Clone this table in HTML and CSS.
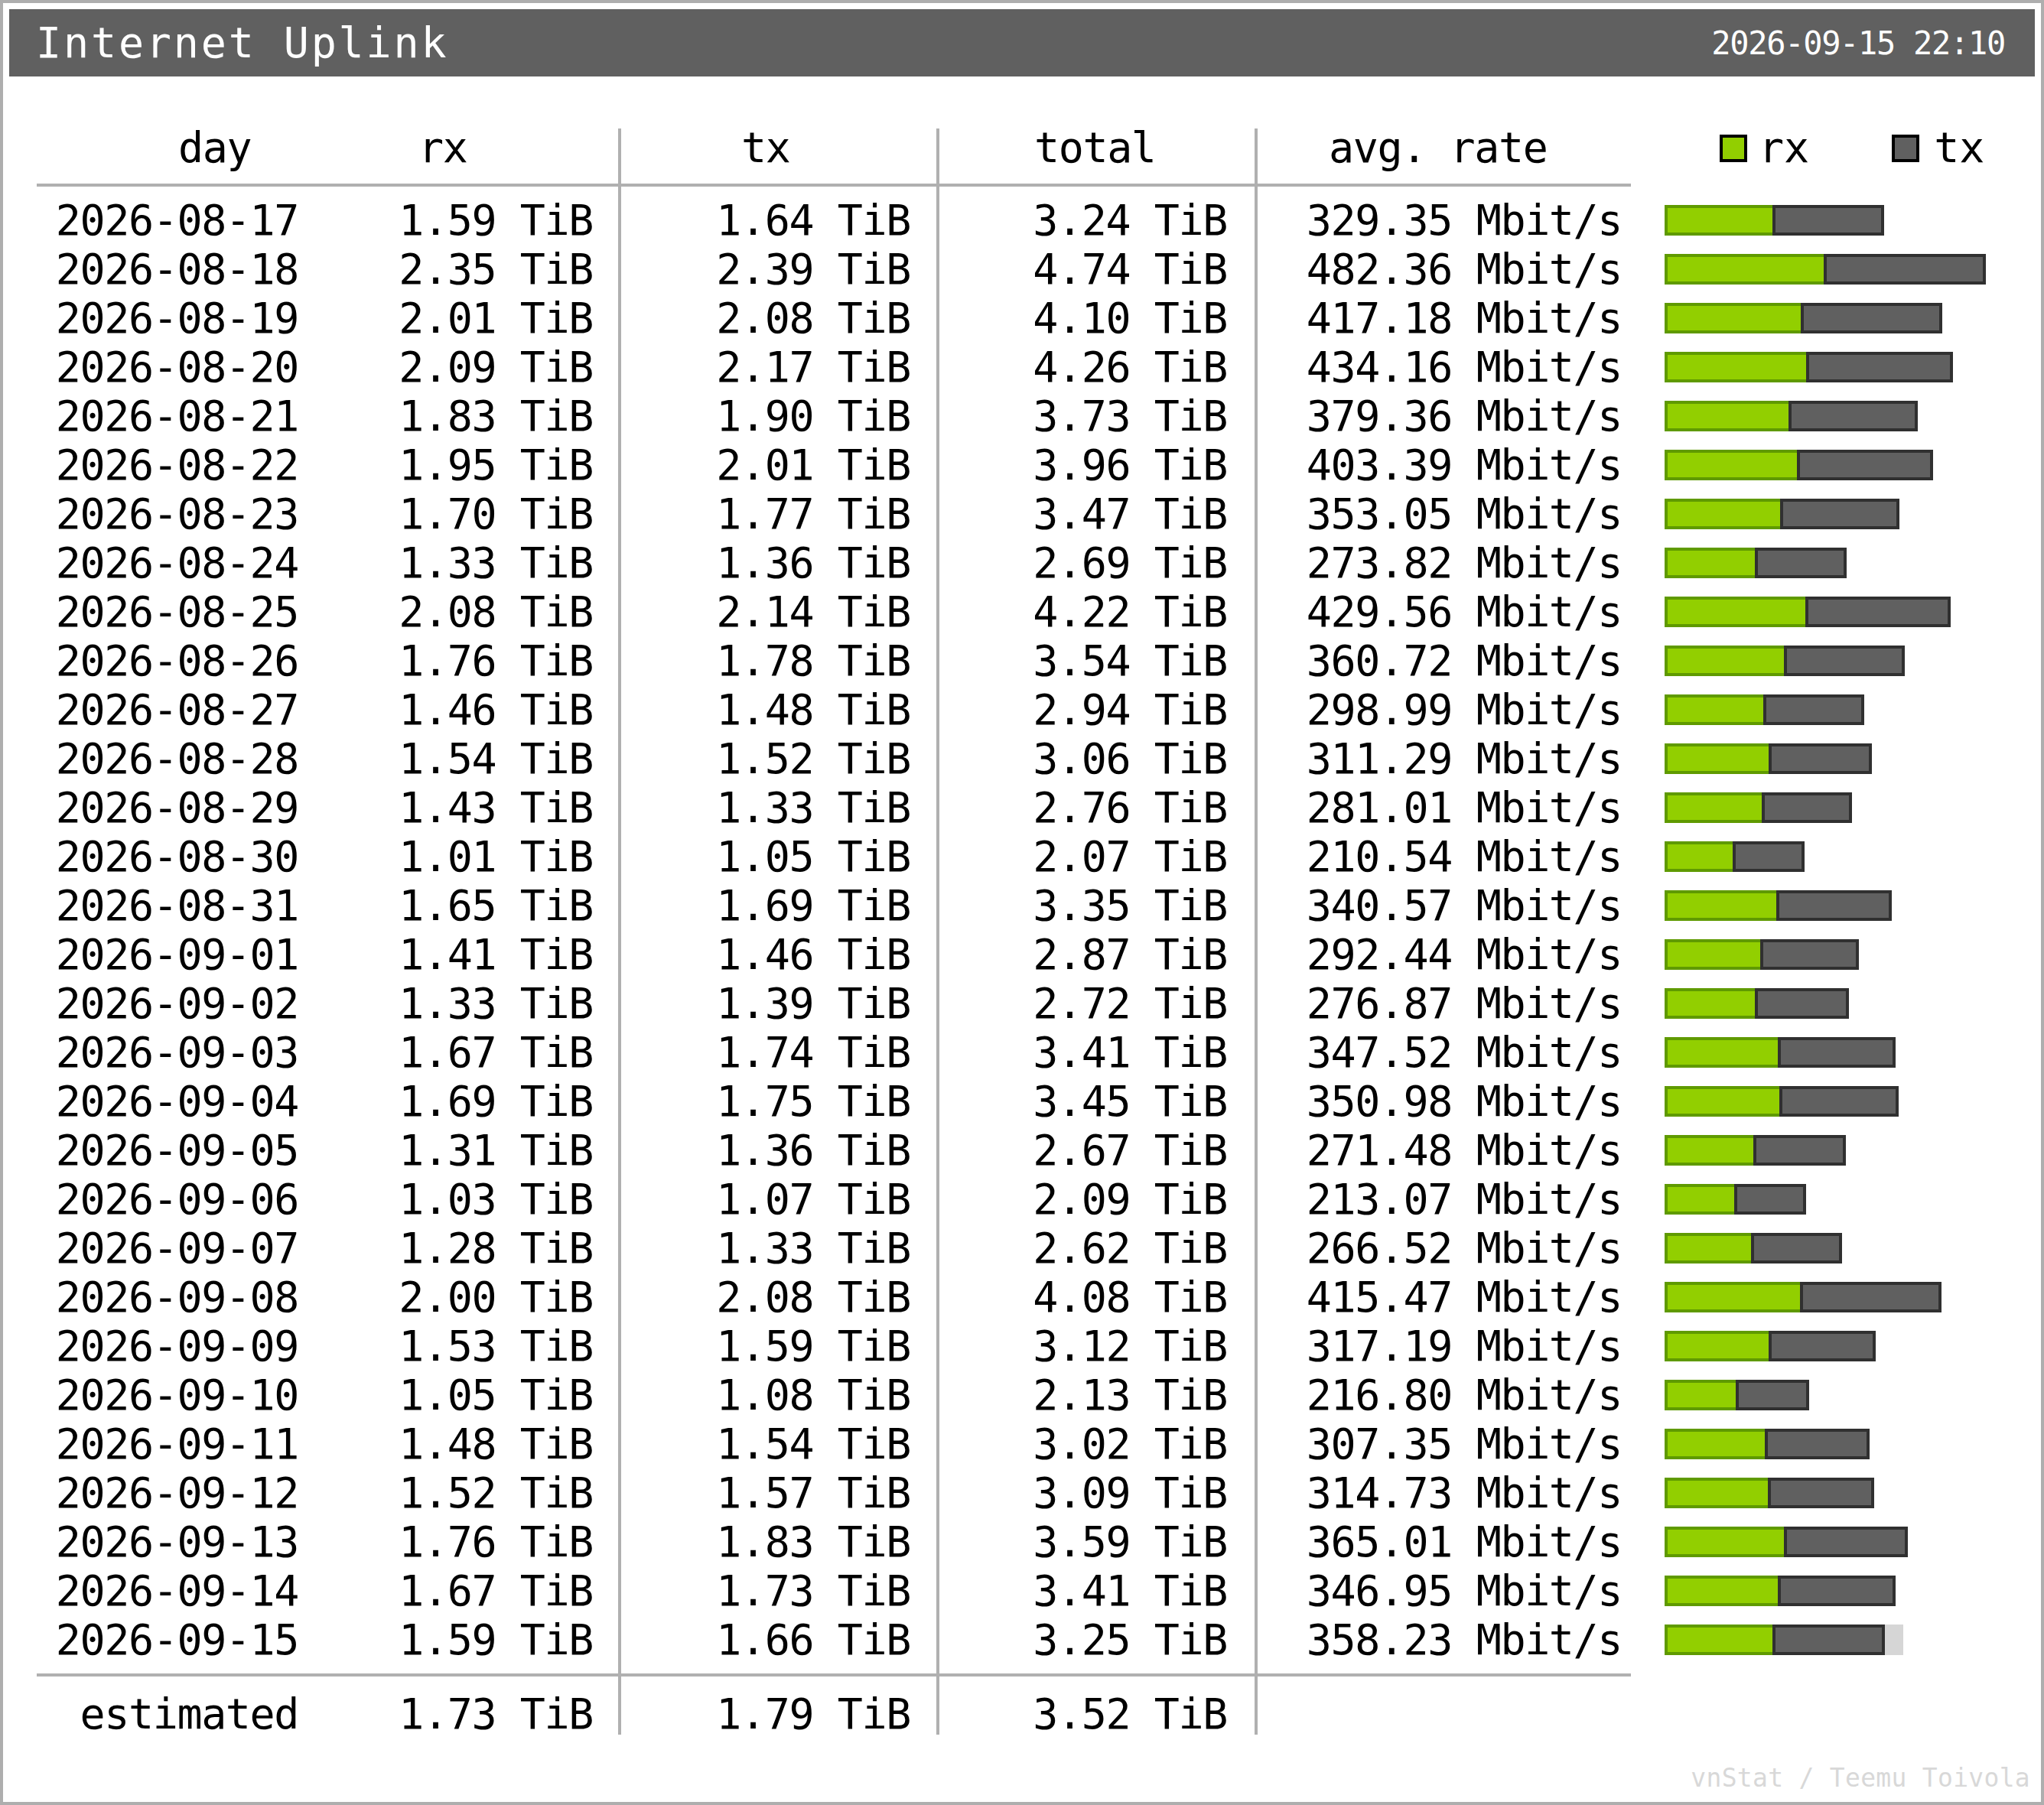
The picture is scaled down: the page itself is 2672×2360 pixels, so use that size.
FILE: index.html
```html
<!DOCTYPE html>
<html>
<head>
<meta charset="utf-8">
<title>Internet Uplink</title>
<link rel="stylesheet" href="styles.css">
</head>
<body>
<div class="frame">
  <header class="topbar">
    <span class="title">Internet Uplink</span>
    <span class="date">2026-09-15 22:10</span>
  </header>
  <div class="tbl">
    <div class="h c1">day</div>
    <div class="h c2">rx</div>
    <div class="h c3 sep">tx</div>
    <div class="h c4 sep">total</div>
    <div class="h c5 sep">avg. rate</div>
    <div class="h leg"><i class="sw sw-rx"></i><span class="lg lg-rx">rx</span><i class="sw sw-tx"></i><span class="lg lg-tx">tx</span></div>

    <div class="b num c1">
      <div>2026-08-17</div><div>2026-08-18</div><div>2026-08-19</div><div>2026-08-20</div><div>2026-08-21</div>
      <div>2026-08-22</div><div>2026-08-23</div><div>2026-08-24</div><div>2026-08-25</div><div>2026-08-26</div>
      <div>2026-08-27</div><div>2026-08-28</div><div>2026-08-29</div><div>2026-08-30</div><div>2026-08-31</div>
      <div>2026-09-01</div><div>2026-09-02</div><div>2026-09-03</div><div>2026-09-04</div><div>2026-09-05</div>
      <div>2026-09-06</div><div>2026-09-07</div><div>2026-09-08</div><div>2026-09-09</div><div>2026-09-10</div>
      <div>2026-09-11</div><div>2026-09-12</div><div>2026-09-13</div><div>2026-09-14</div><div>2026-09-15</div>
    </div>
    <div class="b num c2">
      <div>1.59 TiB</div><div>2.35 TiB</div><div>2.01 TiB</div><div>2.09 TiB</div><div>1.83 TiB</div>
      <div>1.95 TiB</div><div>1.70 TiB</div><div>1.33 TiB</div><div>2.08 TiB</div><div>1.76 TiB</div>
      <div>1.46 TiB</div><div>1.54 TiB</div><div>1.43 TiB</div><div>1.01 TiB</div><div>1.65 TiB</div>
      <div>1.41 TiB</div><div>1.33 TiB</div><div>1.67 TiB</div><div>1.69 TiB</div><div>1.31 TiB</div>
      <div>1.03 TiB</div><div>1.28 TiB</div><div>2.00 TiB</div><div>1.53 TiB</div><div>1.05 TiB</div>
      <div>1.48 TiB</div><div>1.52 TiB</div><div>1.76 TiB</div><div>1.67 TiB</div><div>1.59 TiB</div>
    </div>
    <div class="b num c3 sep">
      <div>1.64 TiB</div><div>2.39 TiB</div><div>2.08 TiB</div><div>2.17 TiB</div><div>1.90 TiB</div>
      <div>2.01 TiB</div><div>1.77 TiB</div><div>1.36 TiB</div><div>2.14 TiB</div><div>1.78 TiB</div>
      <div>1.48 TiB</div><div>1.52 TiB</div><div>1.33 TiB</div><div>1.05 TiB</div><div>1.69 TiB</div>
      <div>1.46 TiB</div><div>1.39 TiB</div><div>1.74 TiB</div><div>1.75 TiB</div><div>1.36 TiB</div>
      <div>1.07 TiB</div><div>1.33 TiB</div><div>2.08 TiB</div><div>1.59 TiB</div><div>1.08 TiB</div>
      <div>1.54 TiB</div><div>1.57 TiB</div><div>1.83 TiB</div><div>1.73 TiB</div><div>1.66 TiB</div>
    </div>
    <div class="b num c4 sep">
      <div>3.24 TiB</div><div>4.74 TiB</div><div>4.10 TiB</div><div>4.26 TiB</div><div>3.73 TiB</div>
      <div>3.96 TiB</div><div>3.47 TiB</div><div>2.69 TiB</div><div>4.22 TiB</div><div>3.54 TiB</div>
      <div>2.94 TiB</div><div>3.06 TiB</div><div>2.76 TiB</div><div>2.07 TiB</div><div>3.35 TiB</div>
      <div>2.87 TiB</div><div>2.72 TiB</div><div>3.41 TiB</div><div>3.45 TiB</div><div>2.67 TiB</div>
      <div>2.09 TiB</div><div>2.62 TiB</div><div>4.08 TiB</div><div>3.12 TiB</div><div>2.13 TiB</div>
      <div>3.02 TiB</div><div>3.09 TiB</div><div>3.59 TiB</div><div>3.41 TiB</div><div>3.25 TiB</div>
    </div>
    <div class="b num c5 sep">
      <div>329.35 Mbit/s</div><div>482.36 Mbit/s</div><div>417.18 Mbit/s</div><div>434.16 Mbit/s</div><div>379.36 Mbit/s</div>
      <div>403.39 Mbit/s</div><div>353.05 Mbit/s</div><div>273.82 Mbit/s</div><div>429.56 Mbit/s</div><div>360.72 Mbit/s</div>
      <div>298.99 Mbit/s</div><div>311.29 Mbit/s</div><div>281.01 Mbit/s</div><div>210.54 Mbit/s</div><div>340.57 Mbit/s</div>
      <div>292.44 Mbit/s</div><div>276.87 Mbit/s</div><div>347.52 Mbit/s</div><div>350.98 Mbit/s</div><div>271.48 Mbit/s</div>
      <div>213.07 Mbit/s</div><div>266.52 Mbit/s</div><div>415.47 Mbit/s</div><div>317.19 Mbit/s</div><div>216.80 Mbit/s</div>
      <div>307.35 Mbit/s</div><div>314.73 Mbit/s</div><div>365.01 Mbit/s</div><div>346.95 Mbit/s</div><div>358.23 Mbit/s</div>
    </div>
    <div class="b bars">
      <div class="br"><span class="rx" style="width:141px"></span><span class="tx" style="width:146px"></span></div>
      <div class="br"><span class="rx" style="width:208px"></span><span class="tx" style="width:212px"></span></div>
      <div class="br"><span class="rx" style="width:178px"></span><span class="tx" style="width:185px"></span></div>
      <div class="br"><span class="rx" style="width:185px"></span><span class="tx" style="width:192px"></span></div>
      <div class="br"><span class="rx" style="width:162px"></span><span class="tx" style="width:169px"></span></div>
      <div class="br"><span class="rx" style="width:173px"></span><span class="tx" style="width:178px"></span></div>
      <div class="br"><span class="rx" style="width:151px"></span><span class="tx" style="width:156px"></span></div>
      <div class="br"><span class="rx" style="width:118px"></span><span class="tx" style="width:120px"></span></div>
      <div class="br"><span class="rx" style="width:184px"></span><span class="tx" style="width:190px"></span></div>
      <div class="br"><span class="rx" style="width:156px"></span><span class="tx" style="width:158px"></span></div>
      <div class="br"><span class="rx" style="width:129px"></span><span class="tx" style="width:132px"></span></div>
      <div class="br"><span class="rx" style="width:136px"></span><span class="tx" style="width:135px"></span></div>
      <div class="br"><span class="rx" style="width:127px"></span><span class="tx" style="width:118px"></span></div>
      <div class="br"><span class="rx" style="width:89px"></span><span class="tx" style="width:94px"></span></div>
      <div class="br"><span class="rx" style="width:146px"></span><span class="tx" style="width:151px"></span></div>
      <div class="br"><span class="rx" style="width:125px"></span><span class="tx" style="width:129px"></span></div>
      <div class="br"><span class="rx" style="width:118px"></span><span class="tx" style="width:123px"></span></div>
      <div class="br"><span class="rx" style="width:148px"></span><span class="tx" style="width:154px"></span></div>
      <div class="br"><span class="rx" style="width:150px"></span><span class="tx" style="width:156px"></span></div>
      <div class="br"><span class="rx" style="width:116px"></span><span class="tx" style="width:121px"></span></div>
      <div class="br"><span class="rx" style="width:91px"></span><span class="tx" style="width:94px"></span></div>
      <div class="br"><span class="rx" style="width:113px"></span><span class="tx" style="width:119px"></span></div>
      <div class="br"><span class="rx" style="width:177px"></span><span class="tx" style="width:185px"></span></div>
      <div class="br"><span class="rx" style="width:136px"></span><span class="tx" style="width:140px"></span></div>
      <div class="br"><span class="rx" style="width:93px"></span><span class="tx" style="width:96px"></span></div>
      <div class="br"><span class="rx" style="width:131px"></span><span class="tx" style="width:137px"></span></div>
      <div class="br"><span class="rx" style="width:135px"></span><span class="tx" style="width:139px"></span></div>
      <div class="br"><span class="rx" style="width:156px"></span><span class="tx" style="width:162px"></span></div>
      <div class="br"><span class="rx" style="width:148px"></span><span class="tx" style="width:154px"></span></div>
      <div class="br"><span class="rx" style="width:141px"></span><span class="tx" style="width:147px"></span><span class="est" style="width:24px"></span></div>
    </div>

    <div class="e num c1">estimated</div>
    <div class="e num c2">1.73 TiB</div>
    <div class="e num c3 sep">1.79 TiB</div>
    <div class="e num c4 sep">3.52 TiB</div>
    <div class="e num c5 sep"></div>
    <div class="e blank"></div>
  </div>
  <div class="foot">vnStat / Teemu Toivola</div>
</div>
</body>
</html>
```

FILE: styles.css
```css
html, body {
  margin: 0;
  padding: 0;
  background: #ffffff;
}

body {
  font-family: "DejaVu Sans Mono", "Liberation Mono", monospace;
  color: #000000;
}

.frame {
  box-sizing: border-box;
  width: 2672px;
  height: 2360px;
  border: 4px solid #aeaeae;
  background: #ffffff;
}

.topbar {
  height: 88px;
  margin: 8px 8px 0 8px;
  background: #606060;
  color: #ffffff;
  display: flex;
  align-items: center;
  justify-content: space-between;
}

.title {
  font-size: 55px;
  letter-spacing: 2.85px;
  padding-left: 35px;
  white-space: nowrap;
}

.date {
  font-size: 42px;
  letter-spacing: -1.3px;
  padding-right: 39px;
  white-space: nowrap;
}

.tbl {
  display: grid;
  grid-template-columns: 372px 388px 416px 416px 492px 1fr;
  margin: 68px 0 0 44px;
  font-size: 55px;
  letter-spacing: -1.4px;
}

.sep {
  border-left: 4px solid #b0b0b0;
}

.h {
  line-height: 50px;
  height: 50px;
  padding-bottom: 22px;
  border-bottom: 4px solid #b0b0b0;
  white-space: nowrap;
  text-align: left;
}

.h.c1 { padding-left: 185px; }
.h.c2 { padding-left: 127px; }
.h.c3 { padding-left: 157px; }
.h.c4 { padding-left: 124px; }
.h.c5 { padding-left: 93px; }

.h.leg {
  border-bottom: 0;
  padding-left: 116px;
  letter-spacing: 0;
}

.sw {
  display: inline-block;
  box-sizing: border-box;
  width: 36px;
  height: 36px;
  border: 4px solid #000000;
  vertical-align: baseline;
}

.sw-rx { background: #92cf00; }
.sw-tx { background: #606060; }

.lg-rx { margin-left: 15px; }
.sw-tx { margin-left: 108px; }
.lg-tx { margin-left: 19px; }

.num {
  text-align: right;
  white-space: nowrap;
}

.c1.num { padding-right: 30px; }
.c2.num { padding-right: 33px; }
.c3.num { padding-right: 34px; }
.c4.num { padding-right: 36px; }
.c5.num { padding-right: 12px; }

.b {
  padding: 12px 0;
  border-bottom: 4px solid #b0b0b0;
}

.b > div {
  height: 64px;
  line-height: 64px;
}

.b.bars {
  border-bottom: 0;
  padding-left: 44px;
}

.br {
  display: flex;
  align-items: center;
}

.br span {
  display: block;
  box-sizing: border-box;
  height: 40px;
}

.br .rx {
  background: #92cf00;
  border: 4px solid #5f9a00;
  border-right: 0;
}

.br .tx {
  background: #606060;
  border: 4px solid #303030;
}

.br .est {
  background: #d6d6d6;
}

.e {
  height: 54px;
  line-height: 54px;
  padding-top: 22px;
}

.foot {
  margin-top: 37px;
  padding-right: 14px;
  text-align: right;
  font-size: 33px;
  letter-spacing: 0.3px;
  line-height: 40px;
  color: #d8d8d8;
  white-space: nowrap;
}
```
